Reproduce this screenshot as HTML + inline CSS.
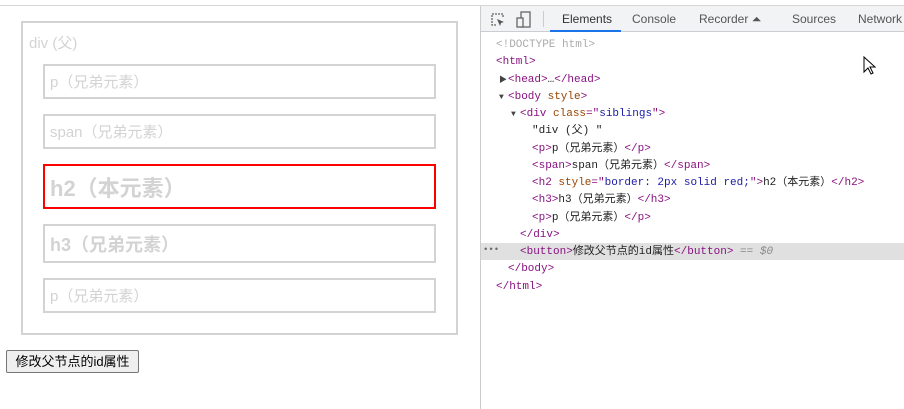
<!DOCTYPE html>
<html><head><meta charset="utf-8"><style>
html,body{margin:0;width:904px;height:409px;overflow:hidden}
body{background:#fff;position:relative;font-family:"Liberation Sans","Noto Sans CJK SC",sans-serif}
.a{position:absolute;box-sizing:border-box}
.bx{border:2px solid #d3d3d3;color:#d3d3d3;padding-left:5px;display:flex;align-items:center;white-space:nowrap}
.dt{font-family:"Liberation Mono","Noto Sans CJK SC",monospace;font-size:11px;color:#222}
.dt div{height:17.25px;line-height:17.25px;white-space:pre}
.t{color:#881280}.n{color:#994500}.v{color:#1a1aa6}.g{color:#aaa}
.tr{display:inline-block;width:9px;font-size:8px;color:#444}
.tab{position:absolute;top:12px;font-size:12px;color:#555}
</style></head><body>
<div class="a" style="left:0;top:5px;width:904px;height:1px;background:#d6d6d6"></div>
<div class="a bx" style="left:21px;top:21px;width:437px;height:314px;align-items:flex-start;padding:9px 0 0 6px;font-size:15px">div (父)</div>
<div class="a bx" style="left:43px;top:64px;width:393px;height:35px;font-size:15px">p（兄弟元素）</div>
<div class="a bx" style="left:43px;top:114px;width:393px;height:35px;font-size:15px">span（兄弟元素）</div>
<div class="a bx" style="left:43px;top:164px;width:393px;height:45px;font-size:22px;font-weight:bold;border-color:#f00">h2（本元素）</div>
<div class="a bx" style="left:43px;top:224px;width:393px;height:39px;font-size:18px;font-weight:bold">h3（兄弟元素）</div>
<div class="a bx" style="left:43px;top:278px;width:393px;height:35px;font-size:15px">p（兄弟元素）</div>
<div class="a" style="left:6px;top:350px;width:133px;height:23px;border:1px solid #767676;border-radius:2px;background:#efefef;font-size:13px;line-height:21px;text-align:center;color:#000">修改父节点的id属性</div>
<div class="a" style="left:480px;top:6px;width:1px;height:403px;background:#ccc"></div>
<div class="a" style="left:481px;top:6px;width:423px;height:26px;background:#f1f3f4;border-bottom:1px solid #cacdd1"></div>
<svg class="a" style="left:490px;top:12px" width="16" height="16" viewBox="0 0 16 16"><path d="M6 13H2V2h11v4" fill="none" stroke="#666" stroke-width="1.3" stroke-dasharray="2 1"/><path d="M7 7l7 3-3 1-1 3z" fill="#555"/></svg>
<svg class="a" style="left:516px;top:11px" width="16" height="18" viewBox="0 0 16 18"><rect x="5" y="1" width="9" height="15" fill="none" stroke="#666" stroke-width="1.3"/><rect x="1" y="7" width="6" height="9" fill="#f1f3f4" stroke="#666" stroke-width="1.3"/></svg>
<div class="a" style="left:543px;top:11px;width:1px;height:16px;background:#ccc"></div>
<div class="tab" style="left:562px;color:#333">Elements</div>
<div class="a" style="left:550px;top:30px;width:71px;height:2px;background:#1a73e8"></div>
<div class="tab" style="left:632px">Console</div>
<div class="tab" style="left:699px">Recorder ⏶</div>
<div class="tab" style="left:792px">Sources</div>
<div class="tab" style="left:858px">Network</div>
<div class="a" style="left:481px;top:243px;width:423px;height:17px;background:#e0e0e0"></div>
<div class="a dt" style="left:483px;top:245px;font-size:9px;color:#666">•••</div>
<div class="a dt" style="left:0;top:37px;width:904px"><div style="padding-left:496px"><span class="g">&lt;!DOCTYPE html&gt;</span></div><div style="padding-left:496px"><span class="t">&lt;html&gt;</span></div><div style="padding-left:499px"><span class="tr">▶</span><span class="t">&lt;head&gt;</span>…<span class="t">&lt;/head&gt;</span></div><div style="padding-left:499px"><span class="tr">▼</span><span class="t">&lt;body </span><span class="n">style</span><span class="t">&gt;</span></div><div style="padding-left:511px"><span class="tr">▼</span><span class="t">&lt;div </span><span class="n">class</span><span class="t">="</span><span class="v">siblings</span><span class="t">"&gt;</span></div><div style="padding-left:532px">"div (父) "</div><div style="padding-left:532px"><span class="t">&lt;p&gt;</span>p（兄弟元素）<span class="t">&lt;/p&gt;</span></div><div style="padding-left:532px"><span class="t">&lt;span&gt;</span>span（兄弟元素）<span class="t">&lt;/span&gt;</span></div><div style="padding-left:532px"><span class="t">&lt;h2 </span><span class="n">style</span><span class="t">="</span><span class="v">border: 2px solid red;</span><span class="t">"&gt;</span>h2（本元素）<span class="t">&lt;/h2&gt;</span></div><div style="padding-left:532px"><span class="t">&lt;h3&gt;</span>h3（兄弟元素）<span class="t">&lt;/h3&gt;</span></div><div style="padding-left:532px"><span class="t">&lt;p&gt;</span>p（兄弟元素）<span class="t">&lt;/p&gt;</span></div><div style="padding-left:520px"><span class="t">&lt;/div&gt;</span></div><div style="padding-left:520px"><span class="t">&lt;button&gt;</span>修改父节点的id属性<span class="t">&lt;/button&gt;</span> <span style="color:#888;font-style:italic">== $0</span></div><div style="padding-left:508px"><span class="t">&lt;/body&gt;</span></div><div style="padding-left:496px"><span class="t">&lt;/html&gt;</span></div></div>
<svg class="a" style="left:863px;top:56px" width="14" height="20" viewBox="0 0 14 20"><path d="M1 1v15l4-4 3 6 2-1-3-6h5z" fill="#fff" stroke="#000" stroke-width="1"/></svg>
</body></html>
